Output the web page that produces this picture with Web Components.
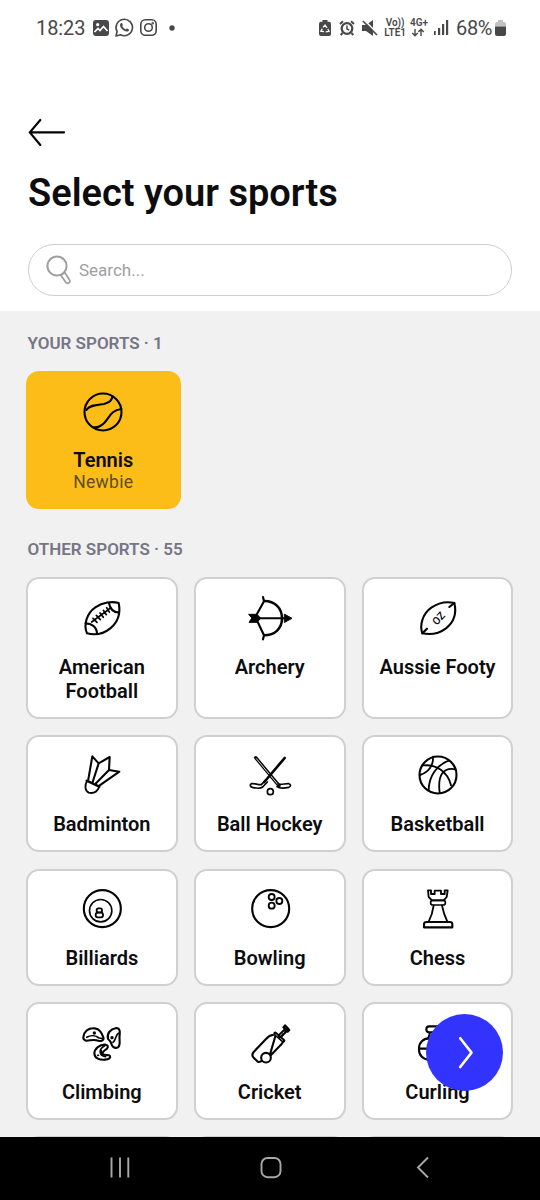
<!DOCTYPE html>
<html lang="en">
<head>
<meta charset="utf-8">
<title>Select your sports</title>
<style>
html,body{margin:0;padding:0;background:#fff}
body{font-family:Roboto,"Liberation Sans",sans-serif;color:#0d0d0f;width:540px;height:1200px;overflow:hidden}
</style>
</head>
<body>
<sports-screen></sports-screen>
<script>
function define(name, html, setup) {
  const tpl = document.createElement('template');
  tpl.innerHTML = html;
  customElements.define(name, class extends HTMLElement {
    constructor() {
      super();
      this.attachShadow({ mode: 'open' }).appendChild(tpl.content.cloneNode(true));
    }
    connectedCallback() { if (setup) setup(this, this.shadowRoot); }
  });
}

/* Icon art: each entry has the centre of its drawing space, then the shapes. */
const ICONS = {
  tennis: ['280 260', `<circle cx="280" cy="260" r="55.5"/>
    <path d="M230 254C244 236 264 240 283 236C300 232 308 226 308 213"/>
    <path d="M335 251C313 254 304 264 294 280C283 297 271 308 252 306"/>`],
  football: ['246 142', `<path d="M296 97C276 91 248 95 226 110C200 128 190 162 201 188C224 194 250 190 271 173C296 152 302 125 296 97Z"/>
    <path d="M267 97C270 116 280 125 297 126M197 158C214 158 230 168 231 188"/>
    <path d="M215 154L270 113M219 143L231 155M229 134L241 147M240 127L250 140M250 119L259 132M260 111L268 124" stroke-width="5"/>`],
  archery: ['750 142', `<path d="M729 80L733 92L708 130L733 192L729 206M708 153L733 192M733 92L708 130" stroke-width="0"/>
    <path d="M729 79L732 92L706 139L732 194L729 206" stroke-width="6.5"/>
    <path d="M733 91C765 91 786 113 786 143C786 173 765 194 733 194" stroke-width="7.5"/>
    <path d="M710 143H796" stroke-width="6"/>
    <path d="M794 131L816 143L794 155Z" fill="currentColor" stroke-width="3"/>
    <path d="M687 131H711L722 143L711 155H687L695 143Z" fill="currentColor" stroke-width="3"/>`],
  aussie: ['503 142', `<path d="M552 97C530 92 503 97 483 111C457 129 447 163 456 188C480 193 507 188 527 173C552 153 559 126 552 97Z"/>
    <path d="M552 97L537 109M456 188L470 174"/>
    <text x="0" y="0" transform="translate(505 143) rotate(-47)" text-anchor="middle" dy="11" font-size="31" font-weight="500" fill="currentColor" stroke="none">OZ</text>`],
  badminton: ['246 136', `<path d="M205 149L217 80L236 101L218 157M236 101L269 82L267 121L228 161M267 121L298 126L238 168"/>
    <path d="M200 153L238 171" stroke-width="7"/>
    <path d="M201 155C193 166 195 184 206 189C220 192 231 187 237 173" stroke-width="5.5"/>`],
  hockey: ['750 136', `<path d="M704 84L722 164" stroke-width="0"/>
    <path d="M707 84L777 168" stroke-width="10"/><path d="M709 87L774 165" stroke="#fff" stroke-width="2.5"/>
    <path d="M794 85L733 157" stroke-width="8"/>
    <path d="M774 163C785 166 796 161 807 162C813 164 813 171 806 173C793 176 778 176 771 171M736 152L724 165C714 166 703 160 694 162C689 165 690 172 697 173C709 176 722 177 728 172L742 157" stroke-width="5"/>
    <circle cx="751" cy="186" r="9" stroke-width="5"/>`],
  basketball: ['503 136', `<circle cx="503" cy="136" r="55.5"/>
    <path d="M488 81C490 107 475 128 449 136M460 107C498 104 532 126 542 167M536 93C500 105 476 139 475 181M556 119C520 112 501 134 508 189" stroke-width="5.5"/>`],
  billiards: ['246 131', `<circle cx="247" cy="130" r="55.5"/><circle cx="242" cy="136" r="33.5" stroke-width="5"/>
    <g stroke-width="5.5"><rect x="230" y="129" width="16" height="12" rx="5"/><rect x="227" y="142" width="22" height="14" rx="6"/></g>`],
  bowling: ['750 131', `<circle cx="752" cy="130" r="55.5"/>
    <g stroke-width="5.5"><circle cx="755" cy="95" r="9"/><circle cx="778" cy="107" r="9"/><circle cx="755" cy="121" r="9"/></g>`],
  chess: ['503 131', `<path d="M473 75H482V86H493V76H512V86H523V75H532L529 95L520 105H485L475 95Z" stroke-width="5.5"/>
    <rect x="481" y="105" width="44" height="14" rx="6" stroke-width="5"/>
    <path d="M490 120C487 142 483 154 475 169M515 120C519 142 524 154 531 169" stroke-width="5.5"/>
    <path d="M461 186V177Q461 170 469 170H539Q546 170 546 177V186Z"/>`],
  climbing: ['246 143', `<path d="M190 125C193 108 205 98 224 99C240 101 245 114 250 126C254 137 240 139 229 135C218 131 208 137 198 136C192 134 189 130 190 125Z"/>
    <path d="M200 126C213 118 228 121 237 128L248 130" stroke-width="5"/><circle cx="223" cy="113" r="3" fill="currentColor" stroke-width="4"/>
    <path d="M264 131C260 113 271 102 289 98C300 98 300 109 299 119C296 134 304 147 294 156C282 162 275 151 273 142Q270 135 264 131Z"/>
    <path d="M298 113C285 117 291 130 279 141" stroke-width="5"/><circle cx="276" cy="127" r="3" fill="currentColor" stroke-width="4"/>
    <path d="M257 148C238 147 224 160 223 174C223 190 240 194 255 193C267 192 273 187 270 182C266 176 253 182 248 176C245 170 254 165 261 160C266 153 263 149 257 148Z"/>
    <path d="M254 151C236 161 235 181 257 184M244 166V176" stroke-width="5"/><circle cx="234" cy="180" r="2" fill="currentColor" stroke-width="3"/>`],
  cricket: ['750 143', `<path d="M759 119C749 119 744 124 738 131L701 170C696 176 696 182 701 187L712 198C717 202 723 199 727 195M748 184L785 146C791 138 791 135 784 131L768 116Z"/>
    <path d="M766 115L790 136" stroke-width="12"/><path d="M767 117L788 135" stroke="#fff" stroke-width="2"/>
    <path d="M780 122L800 102" stroke-width="14"/><path d="M782 119L796 106" stroke="#fff" stroke-width="3" stroke-dasharray="3 6"/>
    <path d="M795 90L808 104L803 109L790 96Z"/>
    <circle cx="738" cy="187" r="14.5" fill="#fff"/>`],
  curling: ['503 143', `<path d="M503 93H476Q468 93 468 102Q468 111 476 111H510M478 112Q479 122 473 129"/>
    <rect x="446" y="129" width="114" height="64" rx="29"/><path d="M446 160H560"/>`],
};

define('sport-icon', `<style>
:host{display:block;width:60px;height:60px;color:#050505}
svg{display:block;width:60px;height:60px;fill:none;stroke:currentColor;stroke-width:6.3;stroke-linecap:round;stroke-linejoin:round;font-family:Roboto,sans-serif}
</style><div></div>`, (el, root) => {
  const icon = ICONS[el.getAttribute('name')];
  const [x, y] = icon[0].split(' ').map(Number);
  root.querySelector('div').innerHTML = `<svg viewBox="${x - 90} ${y - 90} 180 180">${icon[1]}</svg>`;
});

define('sport-card', `<style>
:host{display:flex;flex-direction:column;align-items:center;box-sizing:border-box;background:#fff;border:2px solid #d0d0d0;border-radius:13px;padding:8.6px 4px 0;text-align:center;min-width:0}
:host([selected]){background:#fdbd18;border-color:#fdbd18;width:154.5px;height:138px}
.label{font-size:20px;line-height:24px;font-weight:600;margin-top:7px;max-width:128px}
.level{font-size:17.5px;line-height:21px;color:#5b4d2b;display:none;letter-spacing:.3px}
:host([selected]) .label{margin-top:6px}
:host([selected]) .level{display:block}
</style><div class="icon"></div><div class="label"><slot></slot></div><div class="level"><slot name="level"></slot></div>`, (el, root) => {
  if (el.hasAttribute('icon')) root.querySelector('.icon').innerHTML = `<sport-icon name="${el.getAttribute('icon')}"></sport-icon>`;
});

define('status-bar', `<style>
:host{display:flex;height:55px;box-sizing:border-box;padding:0 34px 0 36px;align-items:center;justify-content:space-between;color:#48484a;font-size:20px}
.side{display:flex;align-items:center}
svg{display:block;overflow:visible}
.time{letter-spacing:-.1px}
.pct{letter-spacing:-.4px}
.net{font-size:10px;line-height:10px;font-weight:600;text-align:center}
</style>
<div class="side"><span class="time">18:23</span>
<svg style="margin-left:8px" width="16" height="16" viewBox="0 0 16 16"><rect width="16" height="16" rx="3" fill="currentColor"/><circle cx="4.7" cy="4.7" r="1.6" fill="#fff"/><path d="M1.5 12L5 8.5L7 10.5L10.5 6.5L14.5 11" fill="none" stroke="#fff" stroke-width="1.7"/></svg>
<svg style="margin-left:6px" width="19" height="19" viewBox="0 0 19 19"><path d="M1 18L2.1 13.5A8.2 8.2 0 1 1 5.5 16.8Z" fill="none" stroke="currentColor" stroke-width="1.6" stroke-linejoin="round"/><path d="M5.5 5.6C6.3 4.6 7.2 5 7.6 6.2C8 7.2 7.6 7.6 7.2 8.1C7.8 9.7 9.2 10.9 10.8 11.5C11.5 10.7 11.9 10.3 12.7 10.8C14 11.5 14.5 11.7 13.6 12.9C12.6 14 10.8 13.8 8.8 12.5C6.2 10.8 4.1 8 5.5 5.6Z" fill="currentColor"/></svg>
<svg style="margin-left:6px" width="17" height="17" viewBox="0 0 17 17" fill="none" stroke="currentColor" stroke-width="1.6"><rect x=".8" y=".8" width="15.4" height="15.4" rx="4.5"/><circle cx="8.5" cy="8.5" r="3.8"/><circle cx="12.7" cy="4.3" r=".5"/></svg>
<svg style="margin-left:12px" width="6" height="6"><circle cx="3" cy="3" r="2.7" fill="currentColor"/></svg></div>
<div class="side">
<svg width="12" height="16" viewBox="0 0 12 16"><path d="M3.5 0H8.5V1.8H10Q12 1.8 12 4V14Q12 16 10 16H2Q0 16 0 14V4Q0 1.8 2 1.8H3.5Z" fill="currentColor"/><path d="M3.2 8.8L1.9 11.2L4.9 11.7M4.1 7.3L6 5L8 8M8.8 9L10 11.3L6.8 11.8" fill="none" stroke="#fff" stroke-width="1.3"/></svg>
<svg style="margin-left:8px" width="16" height="16" viewBox="0 0 16 16" fill="none" stroke="currentColor"><circle cx="8" cy="8.5" r="5.3" stroke-width="2.3"/><path d="M1 4L4 1.3M15 4L12 1.3M3.5 13L1.7 15M12.5 13L14.3 15" stroke-width="2"/><path d="M8 5.5V9L10.3 10.2" stroke-width="1.5"/></svg>
<svg style="margin-left:7px" width="16" height="16" viewBox="0 0 16 16"><path d="M0 5H4L11 0V16L4 11H0Z" fill="currentColor"/><path d="M2 0L17 15" stroke="#fff" stroke-width="1.7"/><path d="M.8 1L15 15" stroke="currentColor" stroke-width="1.7"/></svg>
<span class="net" style="margin-left:6px">Vo))<br>LTE1</span>
<span class="net" style="margin-left:4px">4G+<svg width="16" height="9" viewBox="0 0 16 9" fill="none" stroke="currentColor" stroke-width="1.4"><path d="M5 1V7.5M2.3 5L5 7.7L7.7 5M11 8V1.5M8.3 4L11 1.2L13.7 4"/></svg></span>
<svg style="margin-left:6px" width="15" height="15" viewBox="0 0 15 15" fill="currentColor"><rect x="0" y="11" width="1.7" height="4"/><rect x="4" y="8" width="2.2" height="7"/><rect x="8" y="4" width="2.2" height="11"/><rect x="12" y="0" width="2.2" height="15"/></svg>
<span class="pct" style="margin-left:7px">68%</span>
<svg style="margin-left:3px" width="11" height="16" viewBox="0 0 11 16"><path d="M3 0H8V2H9Q11 2 11 4V6.5H0V4Q0 2 2 2H3Z" fill="#c2c2c4"/><path d="M0 6.5H11V14Q11 16 9 16H2Q0 16 0 14Z" fill="currentColor"/></svg>
</div>`);

define('search-field', `<style>
:host{display:flex;align-items:center;box-sizing:border-box;width:484px;height:52px;border:1.5px solid #cfcfcf;border-radius:26px;padding-left:17px;color:#a0a0a2;font-size:17px}
svg{margin-right:7px}
</style><svg width="26" height="30" viewBox="0 0 26 30" fill="none" stroke="#a0a0a2" stroke-width="2"><circle cx="11" cy="11" r="9.6"/><path d="M14.8 20.2L18.8 17.6L23.8 25.3Q24.4 27.2 22.7 28Q21 28.8 19.8 27.3Z" stroke-width="1.8"/></svg><span><slot></slot></span>`);

define('section-title', `<style>
:host{display:block;font-size:17px;line-height:22px;font-weight:600;color:#767586;padding-left:1.5px}
</style><slot></slot>`);

define('fab-next', `<style>
:host{display:block;position:absolute;left:426px;top:1013.5px;width:77px;height:77px;border-radius:50%;background:#3233fd}
svg{display:block}
</style><svg width="77" height="77" viewBox="0 0 77 77"><path d="M34.2 24.2L45.5 38.6L34.2 53" fill="none" stroke="#fff" stroke-width="2.6" stroke-linecap="round" stroke-linejoin="round"/></svg>`);

define('nav-bar', `<style>
:host{display:flex;height:63px;background:#000;align-items:center}
svg{display:block}
</style><svg width="540" height="63" viewBox="0 0 540 63" fill="none" stroke="#a8a8a8" stroke-width="1.9"><path d="M111.5 20.5V40.5M120 20.5V40.5M128.3 20.5V40.5"/><rect x="261.5" y="21" width="19" height="19.2" rx="6"/><path d="M428 20.5L418 30.5L428 40.5"/></svg>`);

define('sports-screen', `<style>
:host{display:flex;flex-direction:column;position:relative;width:540px;height:1200px;background:#fff}
header{height:256px;box-sizing:border-box;padding:63px 28px 0;display:flex;flex-direction:column}
h1{margin:24px 0 0;font-size:38px;line-height:46px;font-weight:600;white-space:nowrap}
search-field{margin-top:28px}
main{flex:1;min-height:0;overflow:hidden;background:#f1f1f1;padding:21px 26px 0}
.mine{margin-top:17px}
.other{margin-top:29px}
.grid{margin-top:17px;width:487.4px;display:grid;grid-template-columns:repeat(3,1fr);gap:16.2px;grid-template-rows:141.5px repeat(4,117.7px)}
</style>
<status-bar></status-bar>
<header>
<svg width="38" height="28" viewBox="0 0 38 28" fill="none" stroke="#050505" stroke-width="2.2" stroke-linecap="round" stroke-linejoin="round"><path d="M12.3 2L1.8 14.4L12.3 27M1.8 14.4H36"/></svg>
<h1>Select your sports</h1>
<search-field>Search...</search-field>
</header>
<main>
<section-title>YOUR SPORTS · 1</section-title>
<sport-card class="mine" selected icon="tennis">Tennis<span slot="level">Newbie</span></sport-card>
<section-title class="other">OTHER SPORTS · 55</section-title>
<div class="grid">
<sport-card icon="football">American Football</sport-card>
<sport-card icon="archery">Archery</sport-card>
<sport-card icon="aussie">Aussie Footy</sport-card>
<sport-card icon="badminton">Badminton</sport-card>
<sport-card icon="hockey">Ball Hockey</sport-card>
<sport-card icon="basketball">Basketball</sport-card>
<sport-card icon="billiards">Billiards</sport-card>
<sport-card icon="bowling">Bowling</sport-card>
<sport-card icon="chess">Chess</sport-card>
<sport-card icon="climbing">Climbing</sport-card>
<sport-card icon="cricket">Cricket</sport-card>
<sport-card icon="curling">Curling</sport-card>
<sport-card></sport-card><sport-card></sport-card><sport-card></sport-card>
</div>
</main>
<nav-bar></nav-bar>
<fab-next></fab-next>`);
</script>
</body>
</html>
